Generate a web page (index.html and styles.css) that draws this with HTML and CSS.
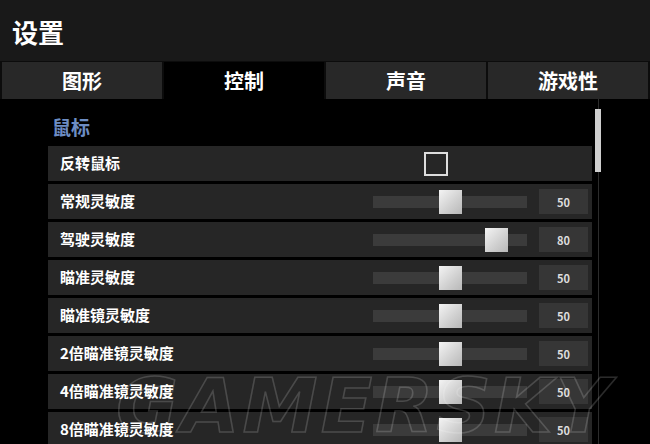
FILE: index.html
```html
<!DOCTYPE html>
<html lang="zh-CN">

<head>
    <meta charset="UTF-8">
    <title>设置</title>
    <link rel="stylesheet" href="styles.css">
</head>

<body>
    <header class="top-bar">
        <h1>设置</h1>
    </header>

    <nav class="tabs">
        <div class="tab">图形</div>
        <div class="tab active">控制</div>
        <div class="tab">声音</div>
        <div class="tab">游戏性</div>
    </nav>

    <main class="panel">
        <div class="list">
            <h2 class="section-title">鼠标</h2>

            <div class="row">
                <span class="label">反转鼠标</span>
                <div class="control">
                    <span class="checkbox"></span>
                </div>
            </div>

            <div id="sliders"></div>
        </div>

        <div class="scrollbar">
            <div class="scroll-thumb"></div>
        </div>

        <div class="watermark">GAMERSKY</div>
    </main>

    <script>
        // mouse sensitivity sliders
        const sliders = [
            { name: "常规灵敏度", value: 50 },
            { name: "驾驶灵敏度", value: 80 },
            { name: "瞄准灵敏度", value: 50 },
            { name: "瞄准镜灵敏度", value: 50 },
            { name: "2倍瞄准镜灵敏度", value: 50 },
            { name: "4倍瞄准镜灵敏度", value: 50 },
            { name: "8倍瞄准镜灵敏度", value: 50 }
        ];

        const box = document.getElementById("sliders");

        sliders.forEach(item => {
            const row = document.createElement("div");
            row.className = "row";
            row.innerHTML = `
                <span class="label">${item.name}</span>
                <div class="control">
                    <div class="track">
                        <span class="thumb" style="left: ${item.value}%"></span>
                    </div>
                    <span class="value">${item.value}</span>
                </div>
            `;
            box.appendChild(row);
        });
    </script>
</body>

</html>
```

FILE: styles.css
```css
/* Reset */
body,
h1,
h2 {
    margin: 0;
    padding: 0;
}

body {
    width: 650px;
    height: 444px;
    overflow: hidden;
    background-color: #000;
    color: #fff;
    font-family: "Noto Sans CJK SC", "Noto Sans", sans-serif;
    font-weight: bold;
}

/* Title bar */
.top-bar {
    height: 61px;
    background-color: #191919;
    display: flex;
    align-items: center;
    padding-left: 12px;
}

.top-bar h1 {
    font-size: 26px;
    line-height: 1;
    margin-top: 3px;
}

/* Tabs */
.tabs {
    display: flex;
    gap: 2px;
    padding: 1px 2px 0 2px;
    background-color: #0c0c0c;
}

.tab {
    flex: 1;
    height: 37px;
    display: flex;
    align-items: center;
    justify-content: center;
    background-color: #282828;
    font-size: 20px;
}

.tab.active {
    background-color: #000;
}

/* Settings panel */
.panel {
    position: relative;
    display: flex;
    padding-left: 48px;
    height: 346px;
}

.list {
    width: 544px;
}

.section-title {
    color: #6d8dc4;
    font-size: 19px;
    line-height: 1;
    padding: 18px 0 10px 4px;
}

.row {
    height: 35px;
    margin-bottom: 3px;
    background-color: #262626;
    display: flex;
    align-items: center;
    padding-left: 12px;
}

.label {
    flex: 1;
    font-size: 15px;
    margin-top: -2px;
}

.control {
    width: 215px;
    margin-right: 4px;
    display: flex;
    align-items: center;
}

.checkbox {
    width: 20px;
    height: 20px;
    margin-left: 51px;
    border: 2px solid #ddd;
}

/* Slider */
.track {
    position: relative;
    width: 154px;
    height: 12px;
    background-color: #3b3b3b;
}

.thumb {
    position: absolute;
    top: -6px;
    width: 23px;
    height: 24px;
    margin-left: -11px;
    background: linear-gradient(135deg, #f4f4f4, #cfcfcf 60%, #b8b8b8);
}

.value {
    width: 49px;
    height: 25px;
    margin-left: 12px;
    background-color: #363636;
    color: #ddd;
    font-size: 11px;
    display: flex;
    align-items: center;
    justify-content: center;
}

/* Scrollbar */
.scrollbar {
    position: relative;
    width: 1px;
    margin-left: 6px;
    background-color: #2c2c2c;
}

.scroll-thumb {
    position: absolute;
    top: 10px;
    left: -3px;
    width: 6px;
    height: 63px;
    background-color: #cfcfcf;
}

/* Watermark over the list */
.watermark {
    position: absolute;
    left: 116px;
    top: 264px;
    font-family: "DejaVu Sans", sans-serif;
    font-size: 74px;
    font-style: italic;
    font-weight: bold;
    letter-spacing: 3px;
    color: transparent;
    -webkit-text-stroke: 1.5px rgba(255, 255, 255, 0.17);
    transform: scaleX(1.02);
    transform-origin: left top;
    pointer-events: none;
}
```
